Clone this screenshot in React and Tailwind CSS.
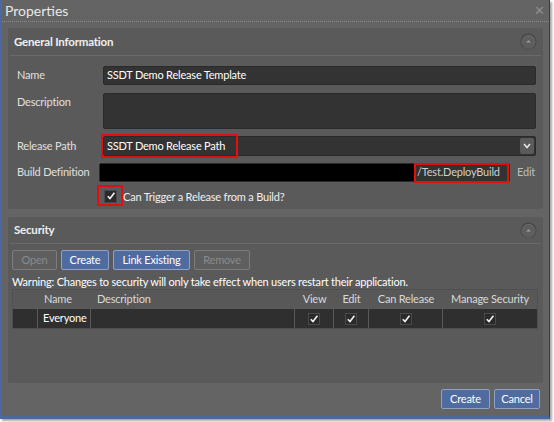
import React from "react";

function Collapse() {
  return (
    <svg width="17" height="17" viewBox="0 0 17 17" className="block">
      <circle cx="8.5" cy="8.5" r="7.4" fill="#5e5e5e" stroke="#454545" strokeWidth="1.2" />
      <circle cx="8.5" cy="9.1" r="6.6" fill="none" stroke="#6e6e6e" strokeWidth="0.6" />
      <path d="M6 9.4 L8.5 7.2 L11 9.4 Z" fill="#a0a0a0" />
    </svg>
  );
}

function Check({ size = 13 }) {
  return (
    <span className="inline-flex items-center justify-center bg-[#2a2a2a] border border-[#4a4a4a]" style={{ width: size, height: size }}>
      <svg width="10" height="10" viewBox="0 0 10 10">
        <path d="M1.8 5.2 L4 7.6 L8.4 1.8" fill="none" stroke="#f2f2f2" strokeWidth="1.6" />
      </svg>
    </span>
  );
}

const Btn = ({ children, w, disabled }) => (
  <div
    className={
      "h-[20px] flex items-center justify-center rounded-[2px] border text-[11px] " +
      (disabled
        ? "border-[#7c7c7c] text-[#8a8a8a] bg-[#5f5f5f]"
        : "border-[#8ea2c8] text-white bg-[#4f6ba0]")
    }
    style={{ width: w }}
  >
    {children}
  </div>
);

export default function App() {
  return (
    <div className="w-[554px] h-[422px] bg-white overflow-hidden tracking-[-0.2px]" style={{ fontFamily: "Lato, 'Noto Sans', sans-serif" }}>
      <div className="w-[550px] h-[419px] bg-[#646464] border-l-2 border-b-[3px] border-r border-l-[#4b68a3] border-b-[#4b68a3] border-r-[#3c3c3c] shadow-[2px_2px_2px_rgba(0,0,0,0.35)] flex flex-col">
        {/* title */}
        <div className="h-[22px] flex items-center justify-between pl-[3px] pr-[4px] border-b border-dotted border-[#8c8c8c]">
          <span className="text-[14px] text-[#e8e8e8] leading-none tracking-normal">Properties</span>
          <span className="text-[13px] text-[#8e8e8e] leading-none">✕</span>
        </div>

        {/* General Information panel */}
        <div className="mt-[6px] ml-[6px] mr-[6px] h-[181px] bg-[#5a5a5a] rounded-[3px] flex flex-col">
          <div className="h-[28px] mx-[2px] flex items-center justify-between pl-[4px] pr-[4px] border-b border-[#6a6a6a]">
            <span className="text-[11.5px] font-bold text-[#f0f0f0]">General Information</span>
            <Collapse />
          </div>
          <div className="flex flex-col pt-[10px] pr-[7px] text-[11px]">
            <div className="flex items-center h-[19px]">
              <span className="w-[95px] pl-[9px] text-[#e0e0e0]">Name</span>
              <div className="flex-1 h-[19px] bg-[#333333] border border-[#2a2a2a] rounded-[2px] flex items-center pl-[3px] text-white">
                SSDT Demo Release Template
              </div>
            </div>
            <div className="flex items-start mt-[8px]">
              <span className="w-[95px] pl-[9px] text-[#e0e0e0] pt-[1px]">Description</span>
              <div className="flex-1 h-[36px] bg-[#333333] border border-[#2a2a2a] rounded-[2px]" />
            </div>
            <div className="flex items-center mt-[7px] h-[20px]">
              <span className="w-[95px] pl-[9px] text-[#e0e0e0]">Release Path</span>
              <div className="flex-1 h-[20px] bg-[#333333] border border-[#2a2a2a] rounded-[2px] flex items-center justify-between pl-[3px] pr-[1px] text-white relative">
                <span>SSDT Demo Release Path</span>
                <div className="w-[14px] h-[16px] bg-[#5a5a5a] rounded-[2px] flex items-center justify-center">
                  <svg width="8" height="6" viewBox="0 0 8 6"><path d="M1 1 L4 4.5 L7 1" fill="none" stroke="#e8e8e8" strokeWidth="1.6" /></svg>
                </div>
                <div className="absolute left-[-3px] top-[-3px] w-[137px] h-[24px] border-2 border-[#e01010]" />
              </div>
            </div>
            <div className="flex items-center mt-[7px] h-[19px]">
              <span className="w-[91px] pl-[9px] text-[#e0e0e0] whitespace-nowrap">Build Definition</span>
              <div className="w-[411px] h-[19px] bg-[#333333] border border-[#2a2a2a] rounded-[2px] flex items-center text-[#cfcfcf] relative">
                <div className="w-[316px] h-full bg-black" />
                <span className="pl-[1px] whitespace-nowrap">/Test.DeployBuild</span>
                <div className="absolute left-[314px] top-[-1px] w-[95px] h-[20px] border-2 border-[#e01010]" />
              </div>
              <span className="ml-[7px] text-[#bdbdbd]">Edit</span>
            </div>
            <div className="flex items-center mt-[9px] pl-[96px] h-[13px]">
              <div className="relative">
                <Check size={13} />
                <div className="absolute left-[-7px] top-[-4px] w-[26px] h-[21px] border-2 border-[#e01010]" />
              </div>
              <span className="ml-[6px] text-[#f0f0f0]">Can Trigger a Release from a Build?</span>
            </div>
          </div>
        </div>

        {/* Security panel */}
        <div className="mt-[8px] ml-[6px] mr-[6px] h-[166px] bg-[#5a5a5a] rounded-[3px] flex flex-col">
          <div className="h-[27px] mx-[2px] flex items-center justify-between pl-[4px] pr-[4px] border-b border-[#6a6a6a]">
            <span className="text-[11.5px] font-bold text-[#f0f0f0]">Security</span>
            <Collapse />
          </div>
          <div className="flex items-center gap-[4px] pl-[4px] mt-[6px]">
            <Btn w={45} disabled>Open</Btn>
            <Btn w={48}>Create</Btn>
            <Btn w={77}>Link Existing</Btn>
            <Btn w={56} disabled>Remove</Btn>
          </div>
          <div className="pl-[4px] mt-[5px] text-[11px] text-white leading-[13px]">
            Warning: Changes to security will only take effect when users restart their application.
          </div>
          <div className="ml-[4px] mr-[5px] mt-[1px] border border-[#4f4f4f] text-[11px]">
            <div className="flex h-[19px] bg-[#585858] text-[#dadada] items-center">
              <div className="w-[25px]" />
              <div className="w-[53px] pl-[6px]">Name</div>
              <div className="w-[204px] pl-[6px]">Description</div>
              <div className="w-[39px] text-center">View</div>
              <div className="w-[35px] text-center">Edit</div>
              <div className="w-[74px] text-center">Can Release</div>
              <div className="flex-1 text-center">Manage Security</div>
            </div>
            <div className="flex h-[19px] bg-[#2f2f2f] text-white items-stretch">
              <div className="w-[25px] border-r border-[#5a5a5a]" />
              <div className="w-[53px] pl-[5px] flex items-center border-r border-[#5a5a5a]">Everyone</div>
              <div className="w-[204px] border-r border-[#5a5a5a]" />
              <div className="w-[39px] flex items-center justify-center border-r border-[#5a5a5a]"><Check size={12} /></div>
              <div className="w-[35px] flex items-center justify-center border-r border-[#5a5a5a]"><Check size={12} /></div>
              <div className="w-[74px] flex items-center justify-center border-r border-[#5a5a5a]"><Check size={12} /></div>
              <div className="flex-1 flex items-center justify-center"><Check size={12} /></div>
            </div>
          </div>
        </div>

        {/* footer */}
        <div className="flex justify-end gap-[4px] mt-[6px] pr-[9px]">
          <Btn w={49}>Create</Btn>
          <Btn w={46}>Cancel</Btn>
        </div>
      </div>
    </div>
  );
}
